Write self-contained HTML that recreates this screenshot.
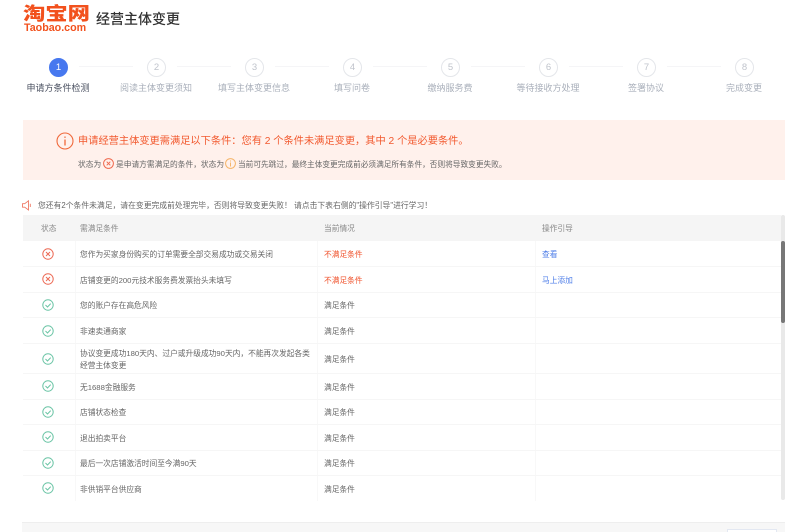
<!DOCTYPE html>
<html lang="zh">
<head>
<meta charset="utf-8">
<style>
html,body{margin:0;padding:0;background:#fff}
body{width:800px;height:532px;overflow:hidden;position:relative;font-family:"Liberation Sans","Noto Sans CJK SC",sans-serif;color:#666}
#w{position:absolute;left:0;top:0;width:800px;height:532px;filter:blur(.35px)}
.t{position:absolute;white-space:nowrap;line-height:12px;font-size:7.72px}
.c{transform:translateX(-50%)}
.b{position:absolute}
.lab{font-size:9px;top:82px;color:#aab0bb}
.num{position:absolute;width:17px;height:17px;border:1px solid #e4e6ea;border-radius:50%;top:58px;text-align:center;line-height:17px;font-size:9.5px;color:#c0c4cc;background:#fff;box-sizing:content-box}
.ln{position:absolute;top:66px;height:1px;width:54px;background:#f5f5f7}
.h{position:absolute;left:23px;width:758px;height:1px;background:#f6f6f6}
.v{position:absolute;top:241px;height:260px;width:1px;background:#f8f8f8}
svg{position:absolute;overflow:visible}
.red{color:#f0532d}
.link{color:#4d7de8}
</style>
</head>
<body>
<div id="w">
<div class="t" style="left:23px;top:3px;font-size:18px;line-height:20px;font-weight:900;color:#f2511d;transform:scaleX(1.24);transform-origin:0 0;font-family:'Noto Sans CJK SC',sans-serif">淘宝网</div>
<div class="t" style="left:24px;top:23px;font-size:10.7px;line-height:11px;font-weight:bold;color:#f2511d">Taobao.com</div>
<div class="t" style="left:96px;top:10px;font-size:14px;line-height:18px;color:#333;font-weight:500">经营主体变更</div>

<div class="num" style="left:49px;background:#4778ef;border-color:#4778ef;color:#fff">1</div>
<div class="ln" style="left:79px"></div>
<div class="num" style="left:147px">2</div>
<div class="ln" style="left:177px"></div>
<div class="num" style="left:245px">3</div>
<div class="ln" style="left:275px"></div>
<div class="num" style="left:343px">4</div>
<div class="ln" style="left:373px"></div>
<div class="num" style="left:441px">5</div>
<div class="ln" style="left:471px"></div>
<div class="num" style="left:539px">6</div>
<div class="ln" style="left:569px"></div>
<div class="num" style="left:637px">7</div>
<div class="ln" style="left:667px"></div>
<div class="num" style="left:735px">8</div>

<div class="t c lab" style="left:58px;color:#4a5060">申请方条件检测</div>
<div class="t c lab" style="left:156px">阅读主体变更须知</div>
<div class="t c lab" style="left:254px">填写主体变更信息</div>
<div class="t c lab" style="left:352px">填写问卷</div>
<div class="t c lab" style="left:450px">缴纳服务费</div>
<div class="t c lab" style="left:548px">等待接收方处理</div>
<div class="t c lab" style="left:646px">签署协议</div>
<div class="t c lab" style="left:744px">完成变更</div>

<div class="b" style="left:23px;top:120px;width:762px;height:60px;background:#fff1ec"></div>
<svg style="left:56px;top:132px" width="18" height="18" viewBox="0 0 18 18" fill="none" stroke="#f0683a"><circle cx="9" cy="9" r="8" stroke-width="1.1"/><path d="M9 4.5v1.4M9 7.5v6" stroke-width="1.3"/></svg>
<div class="t" style="left:78px;top:135px;font-size:10.22px;line-height:14px;color:#f2592e">申请经营主体变更需满足以下条件：您有 2 个条件未满足变更，其中 2 个是必要条件。</div>
<div class="t" style="left:78px;top:159px">状态为</div>
<svg style="left:103px;top:158px" width="11" height="11" viewBox="0 0 11 11" fill="none" stroke="#ef6a4f"><circle cx="5.5" cy="5.5" r="4.9"/><path d="M3.7 3.7l3.6 3.6M7.3 3.7l-3.6 3.6"/></svg>
<div class="t" style="left:116px;top:159px">是申请方需满足的条件，状态为</div>
<svg style="left:225px;top:158px" width="11" height="11" viewBox="0 0 11 11" fill="none" stroke="#f5b56a"><circle cx="5.5" cy="5.5" r="4.9"/><path d="M5.5 2.5v1M5.5 4.5v4"/></svg>
<div class="t" style="left:238px;top:159px;font-size:7.68px">当前可先跳过，最终主体变更完成前必须满足所有条件，否则将导致变更失败。</div>

<svg style="left:22px;top:200px" width="11" height="11" viewBox="0 0 11 11" fill="none" stroke="#ef7a66" stroke-width=".9"><path d="M.5 3.7h2.2L6.5.8v9.2L2.7 7.2H.5zM8.3 3.8v3.2"/></svg>
<div class="t" style="left:38px;top:200px;font-size:7.8px">您还有2个条件未满足，请在变更完成前处理完毕，否则将导致变更失败！ 请点击下表右侧的"操作引导"进行学习！</div>

<div class="b" style="left:23px;top:215px;width:758px;height:26px;background:#f5f5f5"></div>
<div class="t" style="left:41px;top:223px;color:#888">状态</div>
<div class="t" style="left:80px;top:223px;color:#888">需满足条件</div>
<div class="t" style="left:324px;top:223px;color:#888">当前情况</div>
<div class="t" style="left:542px;top:223px;color:#888">操作引导</div>

<div class="v" style="left:75px"></div>
<div class="v" style="left:317px"></div>
<div class="v" style="left:535px"></div>
<div class="h" style="top:266px"></div>
<div class="h" style="top:292px"></div>
<div class="h" style="top:317px"></div>
<div class="h" style="top:343px"></div>
<div class="h" style="top:373px"></div>
<div class="h" style="top:399px"></div>
<div class="h" style="top:424px"></div>
<div class="h" style="top:450px"></div>
<div class="h" style="top:475px"></div>

<svg style="left:42px;top:248px" width="12" height="12" viewBox="0 0 12 12" fill="none" stroke="#ec6a55"><circle cx="6" cy="6" r="5.2"/><path d="M4 4l4 4M8 4l-4 4"/></svg>
<div class="t" style="left:80px;top:249px">您作为买家身份购买的订单需要全部交易成功或交易关闭</div>
<div class="t red" style="left:324px;top:249px">不满足条件</div>
<div class="t link" style="left:542px;top:249px">查看</div>

<svg style="left:42px;top:273px" width="12" height="12" viewBox="0 0 12 12" fill="none" stroke="#ec6a55"><circle cx="6" cy="6" r="5.2"/><path d="M4 4l4 4M8 4l-4 4"/></svg>
<div class="t" style="left:80px;top:275px">店铺变更的200元技术服务费发票抬头未填写</div>
<div class="t red" style="left:324px;top:275px">不满足条件</div>
<div class="t link" style="left:542px;top:275px">马上添加</div>

<svg style="left:42px;top:299px" width="12" height="12" viewBox="0 0 12 12" fill="none" stroke="#6cc5a6"><circle cx="6" cy="6" r="5.2"/><path d="M3.5 6l2 2 3.2-3.4"/></svg>
<div class="t" style="left:80px;top:300px">您的账户存在高危风险</div>
<div class="t" style="left:324px;top:300px">满足条件</div>

<svg style="left:42px;top:325px" width="12" height="12" viewBox="0 0 12 12" fill="none" stroke="#6cc5a6"><circle cx="6" cy="6" r="5.2"/><path d="M3.5 6l2 2 3.2-3.4"/></svg>
<div class="t" style="left:80px;top:326px">非速卖通商家</div>
<div class="t" style="left:324px;top:326px">满足条件</div>

<svg style="left:42px;top:353px" width="12" height="12" viewBox="0 0 12 12" fill="none" stroke="#6cc5a6"><circle cx="6" cy="6" r="5.2"/><path d="M3.5 6l2 2 3.2-3.4"/></svg>
<div class="t" style="left:80px;top:348px">协议变更成功180天内、过户或升级成功90天内，不能再次发起各类</div>
<div class="t" style="left:80px;top:360px">经营主体变更</div>
<div class="t" style="left:324px;top:354px">满足条件</div>

<svg style="left:42px;top:380px" width="12" height="12" viewBox="0 0 12 12" fill="none" stroke="#6cc5a6"><circle cx="6" cy="6" r="5.2"/><path d="M3.5 6l2 2 3.2-3.4"/></svg>
<div class="t" style="left:80px;top:382px">无1688金融服务</div>
<div class="t" style="left:324px;top:382px">满足条件</div>

<svg style="left:42px;top:406px" width="12" height="12" viewBox="0 0 12 12" fill="none" stroke="#6cc5a6"><circle cx="6" cy="6" r="5.2"/><path d="M3.5 6l2 2 3.2-3.4"/></svg>
<div class="t" style="left:80px;top:407px">店铺状态检查</div>
<div class="t" style="left:324px;top:407px">满足条件</div>

<svg style="left:42px;top:431px" width="12" height="12" viewBox="0 0 12 12" fill="none" stroke="#6cc5a6"><circle cx="6" cy="6" r="5.2"/><path d="M3.5 6l2 2 3.2-3.4"/></svg>
<div class="t" style="left:80px;top:433px">退出拍卖平台</div>
<div class="t" style="left:324px;top:433px">满足条件</div>

<svg style="left:42px;top:457px" width="12" height="12" viewBox="0 0 12 12" fill="none" stroke="#6cc5a6"><circle cx="6" cy="6" r="5.2"/><path d="M3.5 6l2 2 3.2-3.4"/></svg>
<div class="t" style="left:80px;top:458px">最后一次店铺激活时间至今满90天</div>
<div class="t" style="left:324px;top:458px">满足条件</div>

<svg style="left:42px;top:482px" width="12" height="12" viewBox="0 0 12 12" fill="none" stroke="#6cc5a6"><circle cx="6" cy="6" r="5.2"/><path d="M3.5 6l2 2 3.2-3.4"/></svg>
<div class="t" style="left:80px;top:484px">非供销平台供应商</div>
<div class="t" style="left:324px;top:484px">满足条件</div>

<div class="b" style="left:781px;top:215px;width:4px;height:285px;background:#e9e9e9;border-radius:2px"></div>
<div class="b" style="left:781px;top:241px;width:4px;height:82px;background:#777;border-radius:2px"></div>

<div class="b" style="left:22px;top:522px;width:763px;height:10px;background:#f7f7f7;border-top:1px solid #eee;box-sizing:border-box"></div>
<div class="b" style="left:727px;top:529px;width:50px;height:3px;background:#fff;border:1px solid #e3e8f2;border-bottom:0;box-sizing:border-box"></div>
</div>
</body>
</html>
